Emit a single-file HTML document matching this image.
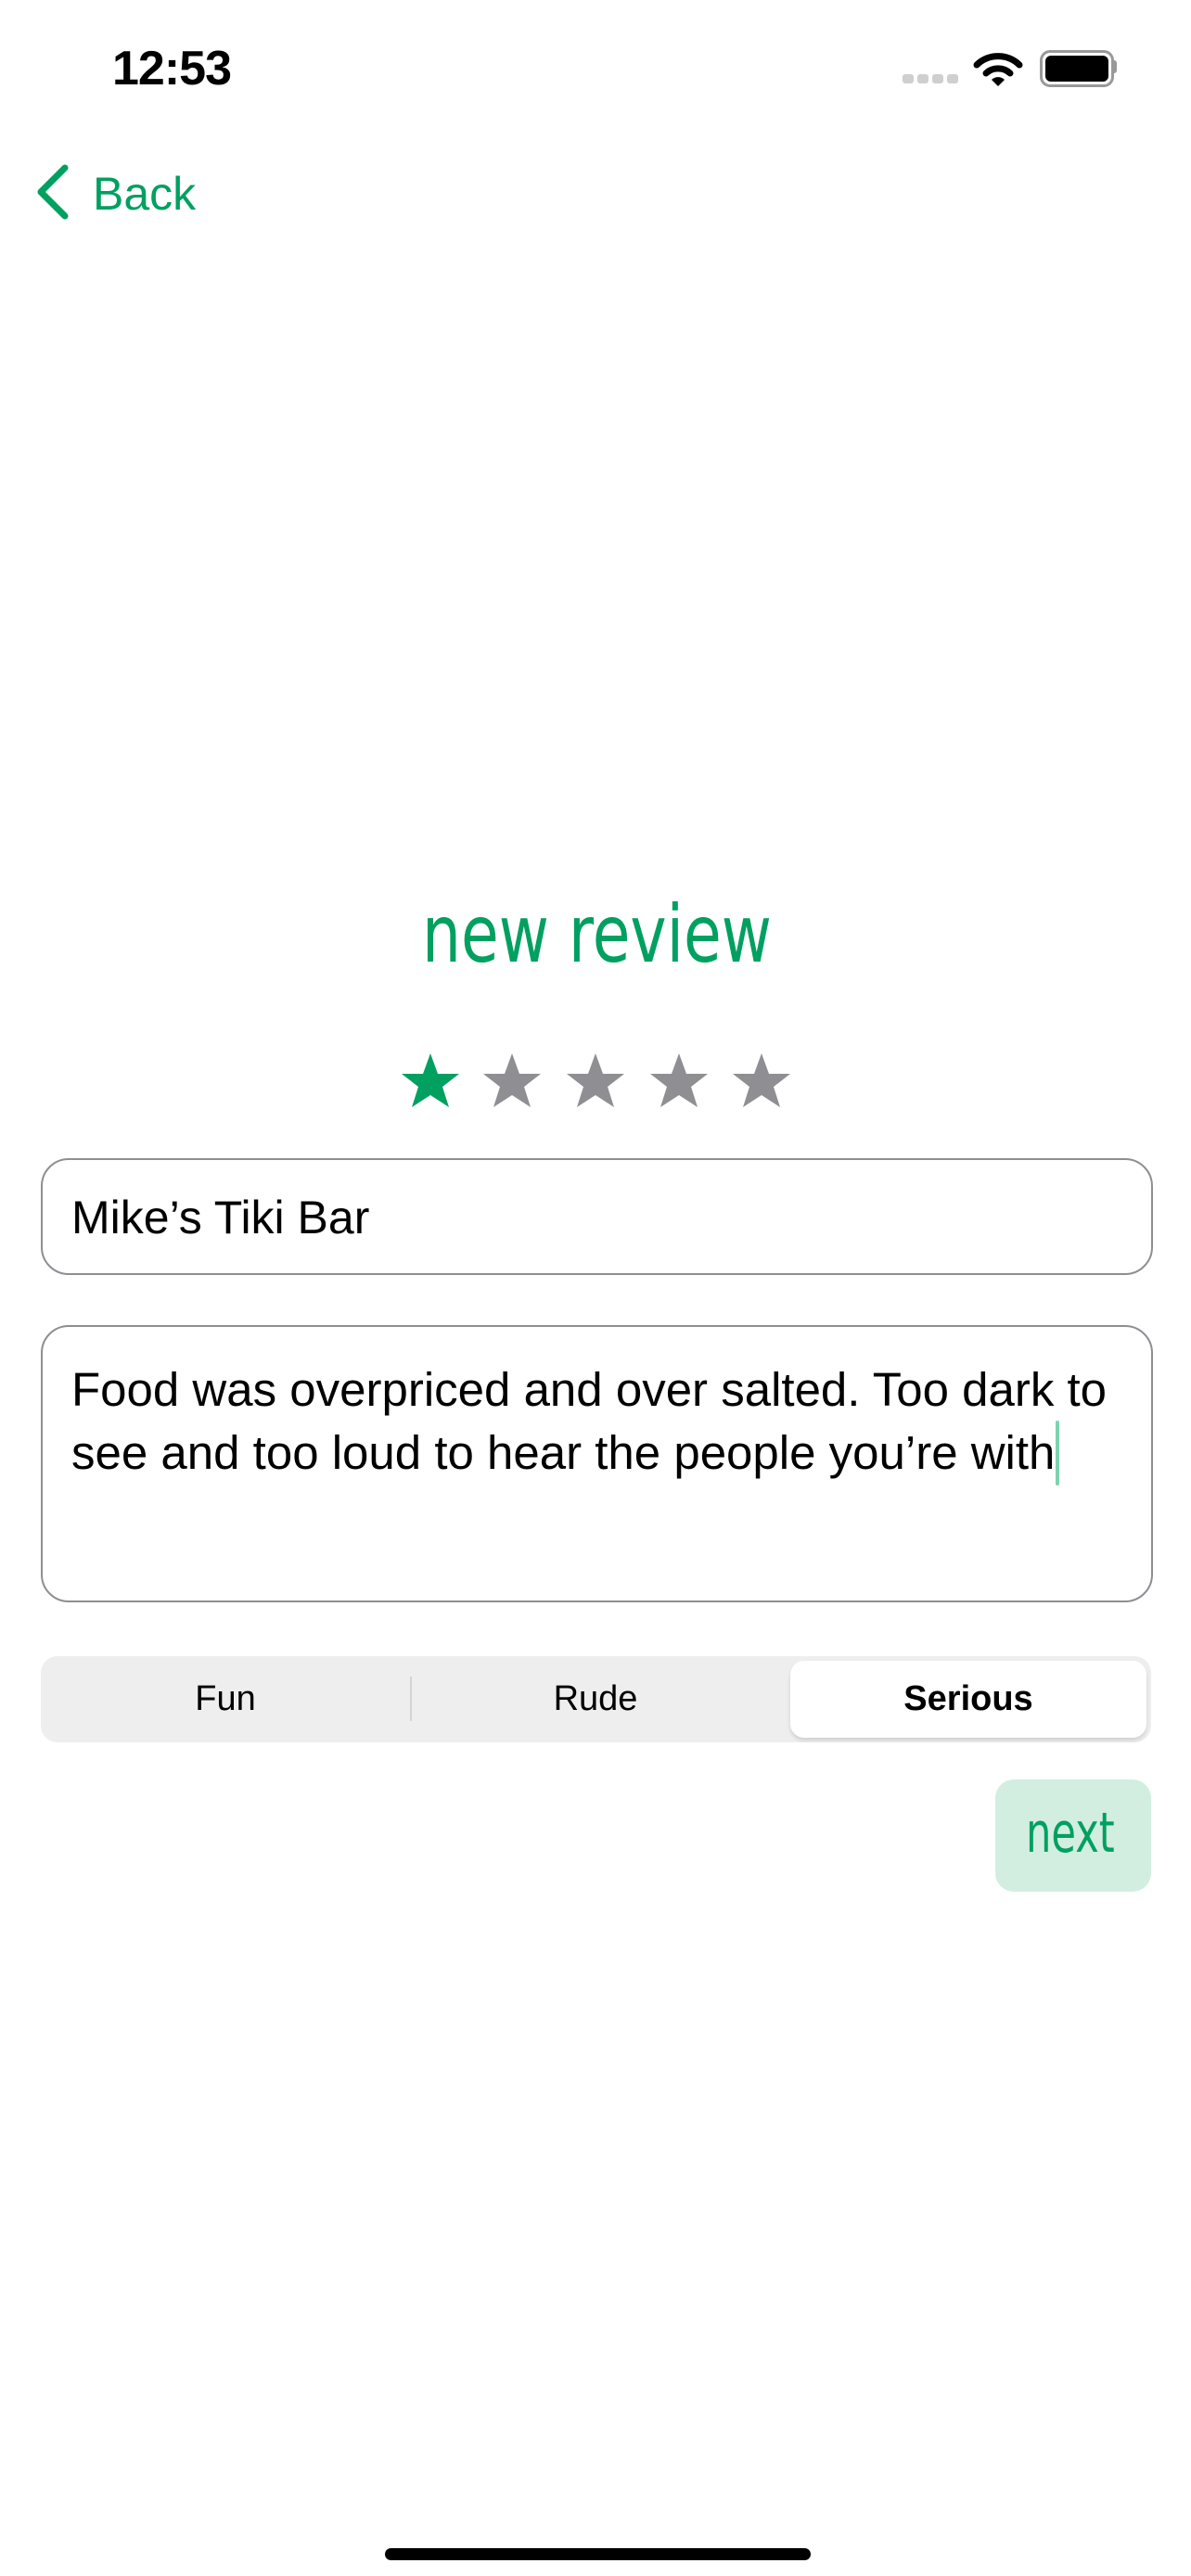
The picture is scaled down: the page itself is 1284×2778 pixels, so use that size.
<!DOCTYPE html>
<html><head><meta charset="utf-8"><style>
html,body{margin:0;padding:0;background:#fff;}
body{width:1284px;height:2778px;position:relative;overflow:hidden;font-family:"Liberation Sans",sans-serif;}
.a{position:absolute;}
.green{color:#00a060;}
.cur{display:inline-block;width:4px;height:70px;background:#7fd3ac;border-radius:2px;vertical-align:-18px;margin-left:1px;}
</style></head><body>
<div class="a" style="left:121px;top:44px;font-size:52px;font-weight:bold;letter-spacing:-1px;line-height:60px;">12:53</div>
<div class="a" style="left:973px;top:80px;width:12px;height:10px;border-radius:3px;background:#cfcfcf"></div>
<div class="a" style="left:989px;top:80px;width:12px;height:10px;border-radius:3px;background:#cfcfcf"></div>
<div class="a" style="left:1005px;top:80px;width:12px;height:10px;border-radius:3px;background:#cfcfcf"></div>
<div class="a" style="left:1021px;top:80px;width:12px;height:10px;border-radius:3px;background:#cfcfcf"></div>
<svg class="a" style="left:1049px;top:54px" width="54" height="40" viewBox="0 0 54 40">
<path d="M4 16 A33 33 0 0 1 50 16" stroke="#000" stroke-width="7" fill="none" stroke-linecap="round"/>
<path d="M14 25 A19 19 0 0 1 40 25" stroke="#000" stroke-width="7" fill="none" stroke-linecap="round"/>
<path d="M20 32 L27 39 L34 32 A10 10 0 0 0 20 32Z" fill="#000"/>
</svg>
<div class="a" style="left:1121px;top:54px;width:74px;height:34px;border:3px solid #999;border-radius:11px;"></div>
<div class="a" style="left:1127px;top:60px;width:68px;height:28px;background:#000;border-radius:6px;"></div>
<div class="a" style="left:1200px;top:65px;width:4px;height:14px;background:#999;border-radius:0 3px 3px 0"></div>
<svg class="a" style="left:36px;top:176px" width="44" height="62" viewBox="0 0 44 62"><path d="M34 5 L8 31 L34 57" stroke="#00a060" stroke-width="7" fill="none" stroke-linecap="round" stroke-linejoin="round"/></svg>
<div class="a green" style="left:100px;top:179px;font-size:50px;line-height:60px;">Back</div>
<div class="a green" style="left:455px;top:958px;font-family:'DejaVu Sans',sans-serif;font-size:86px;line-height:100px;transform:scaleX(0.77);transform-origin:0 0;white-space:nowrap;">new review</div>
<svg class="a" style="left:430px;top:1134px" width="430" height="66" viewBox="0 0 430 66">
<defs><path id="s" d="M0 -31 L8 -9 L31 -9 L13 5 L20 27 L0 14 L-20 27 L-13 5 L-31 -9 L-8 -9Z"/></defs>
<use href="#s" x="34" y="33" fill="#00a060"/>
<use href="#s" x="122" y="33" fill="#8e8e93"/>
<use href="#s" x="212" y="33" fill="#8e8e93"/>
<use href="#s" x="302" y="33" fill="#8e8e93"/>
<use href="#s" x="391" y="33" fill="#8e8e93"/>
</svg>
<div class="a" style="left:44px;top:1249px;width:1195px;height:122px;border:2px solid #8e8e93;border-radius:30px;"></div>
<div class="a" style="left:77px;top:1283px;font-size:50px;line-height:60px;">Mike’s Tiki Bar</div>
<div class="a" style="left:44px;top:1429px;width:1195px;height:295px;border:2px solid #8e8e93;border-radius:30px;"></div>
<div class="a" style="left:77px;top:1466px;width:1160px;font-size:51px;line-height:66px;white-space:nowrap;">Food was overpriced and over salted. Too dark to<br>see and too loud to hear the people you’re with<span class="cur"></span></div>
<div class="a" style="left:44px;top:1786px;width:1197px;height:93px;background:#eeeeef;border-radius:18px;"></div>
<div class="a" style="left:442px;top:1808px;width:2px;height:48px;background:#d4d4d6;"></div>
<div class="a" style="left:852px;top:1791px;width:384px;height:83px;background:#fff;border-radius:15px;box-shadow:0 3px 4px rgba(0,0,0,0.12);"></div>
<div class="a" style="left:44px;top:1808px;width:398px;text-align:center;font-size:38px;line-height:48px;">Fun</div>
<div class="a" style="left:443px;top:1808px;width:398px;text-align:center;font-size:38px;line-height:48px;">Rude</div>
<div class="a" style="left:852px;top:1808px;width:384px;text-align:center;font-size:38px;line-height:48px;font-weight:bold;">Serious</div>
<div class="a" style="left:1073px;top:1919px;width:168px;height:121px;background:#d2eee0;border-radius:20px;"></div>
<div class="a green" style="left:1106px;top:1942px;font-family:'DejaVu Sans',sans-serif;font-size:60px;line-height:70px;transform:scaleX(0.72);transform-origin:0 0;">next</div>
<div class="a" style="left:415px;top:2748px;width:459px;height:13px;background:#000;border-radius:7px;"></div>
</body></html>
